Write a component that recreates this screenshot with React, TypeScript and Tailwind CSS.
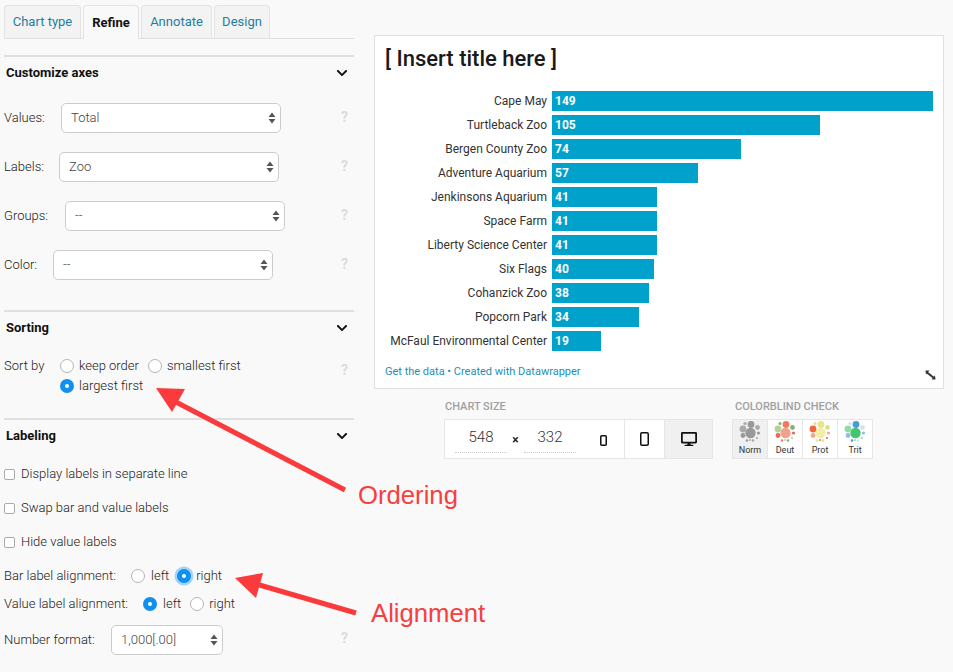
import { FaChevronDown, FaDesktop } from 'react-icons/fa';

const bars = [
  { label: 'Cape May', value: 149 },
  { label: 'Turtleback Zoo', value: 105 },
  { label: 'Bergen County Zoo', value: 74 },
  { label: 'Adventure Aquarium', value: 57 },
  { label: 'Jenkinsons Aquarium', value: 41 },
  { label: 'Space Farm', value: 41 },
  { label: 'Liberty Science Center', value: 41 },
  { label: 'Six Flags', value: 40 },
  { label: 'Cohanzick Zoo', value: 38 },
  { label: 'Popcorn Park', value: 34 },
  { label: 'McFaul Environmental Center', value: 19 },
];

const Help = () => <span className="text-[14px] font-bold text-[#dcdcdc] leading-none">?</span>;

const Section = ({ title }: { title: string }) => (
  <div className="border-t-2 border-[#e0e0e0] h-[33px] pl-[2px] pr-[6px] flex items-center justify-between">
    <span className="text-[13px] font-bold text-[#111]">{title}</span>
    <FaChevronDown className="text-[12px] text-[#111]" />
  </div>
);

const SelectBox = ({ value, className }: { value: string; className: string }) => (
  <div className={`h-[30px] bg-white border border-[#ccc] rounded-[5px] flex items-center justify-between pl-[9px] pr-[4px] text-[13px] font-light text-[#444] ${className}`}>
    <span>{value}</span>
    <svg width="8" height="12" viewBox="0 0 8 12">
      <path d="M4 .5 7.5 5H.5Z M4 11.5 .5 7h7Z" fill="#555" />
    </svg>
  </div>
);

const SelectRow = ({ label, value, className }: { label: string; value: string; className: string }) => (
  <div className="flex items-center h-[30px] mb-[19px] text-[13px] font-light text-[#222]">
    <span className={className}>{label}</span>
    <SelectBox value={value} className="w-[220px]" />
    <span className="ml-auto mr-[6px]"><Help /></span>
  </div>
);

const Radio = ({ on, glow }: { on?: boolean; glow?: boolean }) =>
  on ? (
    <span className={`w-[14px] h-[14px] rounded-full bg-[#1190ee] flex items-center justify-center shrink-0 ${glow ? 'shadow-[0_0_0_2.5px_#a5d3f5]' : ''}`}>
      <span className="w-[4px] h-[4px] rounded-full bg-white" />
    </span>
  ) : (
    <span className="w-[14px] h-[14px] rounded-full bg-white border border-[#b5b5b5] shrink-0" />
  );

const Check = ({ label }: { label: string }) => (
  <div className="flex items-center h-[14px] mb-[20px] text-[13px] font-light text-[#222]">
    <span className="w-[11px] h-[11px] bg-white border border-[#aaa] rounded-[2px] mr-[6px]" />
    {label}
  </div>
);

const Blob = ({ colors }: { colors: string[] }) => (
  <svg width="22" height="22" viewBox="0 0 22 22">
    <circle cx="11.5" cy="12" r="5.2" fill={colors[0]} />
    <circle cx="4" cy="8" r="3.4" fill={colors[1]} />
    <circle cx="12" cy="3.5" r="3.4" fill={colors[2]} />
    <circle cx="4" cy="14.5" r="2.4" fill={colors[3]} />
    <circle cx="18.5" cy="6.5" r="2.4" fill={colors[4]} />
    <circle cx="19.5" cy="12" r="1.6" fill={colors[3]} />
    <circle cx="6" cy="2.5" r="1.6" fill={colors[4]} />
    <circle cx="8" cy="19.5" r="1.3" fill={colors[2]} />
    <circle cx="14" cy="19.5" r="1.3" fill={colors[4]} />
    <circle cx="18" cy="17" r="1.1" fill={colors[1]} />
    <circle cx="11" cy="19" r="0.9" fill={colors[1]} />
  </svg>
);

const vision = [
  { name: 'Norm', colors: ['#999', '#aaa', '#999', '#999', '#aaa'], active: true },
  { name: 'Deut', colors: ['#f2a08f', '#b8cf9a', '#ee7b62', '#e8694f', '#88b36a'] },
  { name: 'Prot', colors: ['#f2efa5', '#f0673f', '#e6e48e', '#f4a98a', '#dfe08a'] },
  { name: 'Trit', colors: ['#43c46f', '#8fdcaa', '#4b9ad8', '#8ebde4', '#cfe4f3'] },
];

export default function App() {
  return (
    <div
      className="relative w-[953px] h-[672px] overflow-hidden bg-[#f9f9f9] flex pl-[4px] text-[#333]"
      style={{ fontFamily: 'Roboto, sans-serif' }}
    >
      <div className="w-[350px] shrink-0">
        <div className="flex gap-[2px] pt-[5px] h-[39px] border-b border-[#e0e0e0] text-[13px] text-[#1d7fa0]">
          <div className="w-[77px] h-[33px] flex items-center justify-center bg-[#f3f3f3] border border-b-0 border-[#e3e3e3] rounded-t-[4px]">Chart type</div>
          <div className="w-[56px] h-[34px] flex items-center justify-center bg-[#f9f9f9] border border-b-0 border-[#e3e3e3] rounded-t-[4px] font-bold text-[#111]">Refine</div>
          <div className="w-[71px] h-[33px] flex items-center justify-center bg-[#f3f3f3] border border-b-0 border-[#e3e3e3] rounded-t-[4px]">Annotate</div>
          <div className="w-[56px] h-[33px] flex items-center justify-center bg-[#f3f3f3] border border-b-0 border-[#e3e3e3] rounded-t-[4px]">Design</div>
        </div>

        <div className="mt-[16px]">
          <Section title="Customize axes" />
          <div className="pt-[15px] h-[222px]">
            <SelectRow label="Values:" value="Total" className="w-[57px]" />
            <SelectRow label="Labels:" value="Zoo" className="w-[55px]" />
            <SelectRow label="Groups:" value="--" className="w-[61px]" />
            <SelectRow label="Color:" value="--" className="w-[49px]" />
          </div>
        </div>

        <Section title="Sorting" />
        <div className="h-[75px] pt-[16px] flex text-[13px] font-light text-[#222]">
          <span className="w-[56px] -mt-[3px]">Sort by</span>
          <div className="w-[200px] flex flex-wrap gap-y-[6px] content-start">
            <span className="flex items-center gap-[5px] mr-[9px] h-[14px]"><Radio />keep order</span>
            <span className="flex items-center gap-[5px] h-[14px]"><Radio />smallest first</span>
            <span className="flex items-center gap-[5px] h-[14px]"><Radio on />largest first</span>
          </div>
          <span className="ml-auto mr-[6px] pt-[2px]"><Help /></span>
        </div>

        <Section title="Labeling" />
        <div className="pt-[16px]">
          <Check label="Display labels in separate line" />
          <Check label="Swap bar and value labels" />
          <Check label="Hide value labels" />
          <div className="flex items-center h-[14px] mt-[1px] text-[13px] font-light text-[#222]">
            <span className="w-[127px]">Bar label alignment:</span>
            <span className="flex items-center gap-[6px] mr-[8px]"><Radio />left</span>
            <span className="flex items-center gap-[5px]"><Radio on glow />right</span>
          </div>
          <div className="flex items-center h-[14px] mt-[14px] text-[13px] font-light text-[#222]">
            <span className="w-[139px]">Value label alignment:</span>
            <span className="flex items-center gap-[6px] mr-[9px]"><Radio on />left</span>
            <span className="flex items-center gap-[5px]"><Radio />right</span>
          </div>
          <div className="flex items-center h-[30px] mt-[14px] text-[13px] font-light text-[#222]">
            <span className="w-[107px]">Number format:</span>
            <SelectBox value="1,000[.00]" className="w-[112px]" />
            <span className="ml-auto mr-[6px] -mt-[2px]"><Help /></span>
          </div>
        </div>
      </div>

      <div className="w-[570px] ml-[20px] pt-[35px] shrink-0">
        <div className="h-[354px] bg-white border border-[#e0e0e0] pl-[10px] pr-[10px] flex flex-col">
          <h1 className="text-[22px] font-medium text-[#1a1a1a] leading-none mt-[12px] h-[43px]">[ Insert title here ]</h1>
          <div className="flex flex-col gap-[4px]">
            {bars.map((bar) => (
              <div key={bar.label} className="flex items-center h-[20px]">
                <span className="w-[167px] pr-[5px] text-right text-[12px] text-[#333] whitespace-nowrap">{bar.label}</span>
                <div
                  className="h-[20px] bg-[#00a2cc] text-white text-[12px] font-bold flex items-center pl-[3px]"
                  style={{ width: `${(bar.value / 149) * 381}px` }}
                >
                  {bar.value}
                </div>
              </div>
            ))}
          </div>
          <div className="flex items-center justify-between mt-[13px] text-[11px] text-[#1d8fb8]">
            <span>Get the data • Created with Datawrapper</span>
            <svg width="11" height="10" viewBox="0 0 11 10" className="mt-[5px] -mr-[3px]">
              <path d="M2 2.5 9 8" stroke="#333" strokeWidth="2" />
              <path d="M.5 .5h4l-3.5 4Z M10.5 9.5h-4l3.5-4Z" fill="#333" />
            </svg>
          </div>
        </div>

        <div className="flex ml-[70px] mt-[12px]">
          <div className="w-[269px]">
            <div className="text-[11px] font-medium text-[#a0a0a0] h-[18px] leading-[12px] pl-[1px]">CHART SIZE</div>
            <div className="flex h-[40px] w-[269px] bg-white border border-[#e6e6e6]">
              <div className="flex items-start w-[179px] pl-[10px] pt-[2px]">
                <span className="w-[52px] h-[31px] border-b border-dotted border-[#ccc] text-center text-[15px] font-light leading-[30px] text-[#333]">548</span>
                <span className="w-[17px] text-center text-[12px] font-bold text-[#222] leading-[36px]">×</span>
                <span className="w-[52px] h-[31px] border-b border-dotted border-[#ccc] text-center text-[15px] font-light leading-[30px] text-[#333]">332</span>
                <span className="ml-[24px] mt-[13px]">
                  <svg width="7" height="11" viewBox="0 0 7 11"><rect x=".75" y=".75" width="5.5" height="9.5" rx="1" fill="none" stroke="#111" strokeWidth="1.5" /></svg>
                </span>
              </div>
              <div className="w-[40px] border-l border-[#e6e6e6] flex items-center justify-center">
                <svg width="9" height="14" viewBox="0 0 9 14"><rect x=".75" y=".75" width="7.5" height="12.5" rx="1.2" fill="none" stroke="#111" strokeWidth="1.5" /></svg>
              </div>
              <div className="flex-1 border-l border-[#e6e6e6] bg-[#f0f0f0] flex items-center justify-center">
                <FaDesktop className="text-[16px] text-[#111]" />
              </div>
            </div>
          </div>
          <div className="ml-[19px]">
            <div className="text-[11px] font-medium text-[#a0a0a0] h-[18px] leading-[12px] pl-[3px]">COLORBLIND CHECK</div>
            <div className="flex h-[40px] w-[141px] bg-white border border-[#e6e6e6]">
              {vision.map((mode, i) => (
                <div
                  key={mode.name}
                  className={`flex-1 flex flex-col items-center pt-[1px] text-[9px] leading-[10px] text-[#333] ${i > 0 ? 'border-l border-[#e6e6e6]' : ''} ${mode.active ? 'bg-[#f0f0f0]' : ''}`}
                >
                  <Blob colors={mode.colors} />
                  <span className="mt-[2px]">{mode.name}</span>
                </div>
              ))}
            </div>
          </div>
        </div>
      </div>

      <svg className="absolute left-0 top-0 pointer-events-none" width="953" height="672" viewBox="0 0 953 672">
        <path d="M345 490 174 401" stroke="#fb3a3c" strokeWidth="5" fill="none" />
        <path d="M156 388 185 389 172 412Z" fill="#fb3a3c" />
        <path d="M356 613 256 584" stroke="#fb3a3c" strokeWidth="5" fill="none" />
        <path d="M235 578 263 573 256 598Z" fill="#fb3a3c" />
      </svg>
      <span className="absolute left-[358px] top-[480px] text-[25.7px] leading-[30px] text-[#f6403f]" style={{ fontFamily: '"Liberation Sans", sans-serif' }}>Ordering</span>
      <span className="absolute left-[371px] top-[598px] text-[25.7px] leading-[30px] text-[#f6403f]" style={{ fontFamily: '"Liberation Sans", sans-serif' }}>Alignment</span>
    </div>
  );
}
